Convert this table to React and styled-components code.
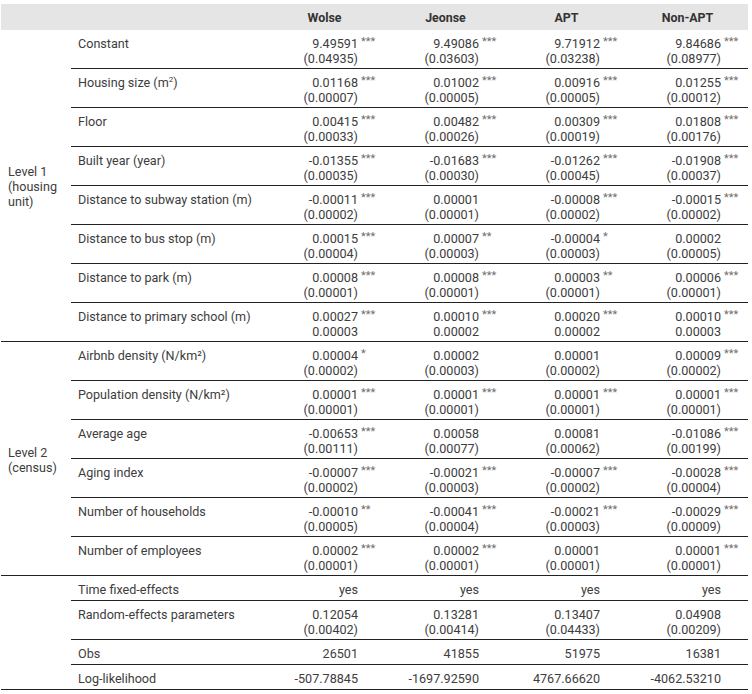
import React from "react";
import styled, { createGlobalStyle } from "styled-components";

const GlobalStyle = createGlobalStyle`
	body {
		margin: 0;
		background: #fff;
		font-family: Roboto, "Liberation Sans", sans-serif;
		color: #3d3d3d;
	}
`;

const Page = styled.div`
	padding: 4px 4px 0 1px;
`;

const Table = styled.div`
	width: 747px;
	display: flex;
	flex-direction: column;
	font-size: 12.6px;
	line-height: 15px;
`;

const HeaderRow = styled.div`
	display: grid;
	grid-template-columns: 263px repeat(4, 121px);
	height: 26px;
	align-items: center;
	background-color: #e5e5e5;
`;

const HeaderCell = styled.div`
	text-align: center;
	font-weight: 700;
	font-size: 12.4px;
	color: #333;
	padding-top: 1px;
`;

const Group = styled.div`
	display: grid;
	grid-template-columns: 70px 1fr;
	border-bottom: 1px solid #222;
`;

const GroupLabel = styled.div`
	display: flex;
	align-items: center;
	padding-left: 7px;
	padding-top: 2px;
`;

const Rows = styled.div`
	display: flex;
	flex-direction: column;
`;

const Row = styled.div`
	display: grid;
	grid-template-columns: 193px repeat(4, 121px);
	padding: 6px 0 ${(p) => (p.$tall ? "2px" : "3px")};
	border-bottom: 1px solid #222;
	&:last-child {
		border-bottom: none;
	}
`;

const VarName = styled.div`
	padding-left: 7px;
	sup {
		font-size: 8px;
		line-height: 0;
	}
`;

const Cell = styled.div`
	display: grid;
	grid-template-columns: 1fr 27px;
	justify-items: end;
`;

const Value = styled.span`
	grid-column: 1;
`;

const Stars = styled.span`
	grid-column: 2;
	justify-self: start;
	padding-left: 3px;
	font-size: 11px;
	line-height: 12px;
	color: #707070;
`;

const levelOne = [
	["Constant", ["9.49591", "***", "(0.04935)"], ["9.49086", "***", "(0.03603)"], ["9.71912", "***", "(0.03238)"], ["9.84686", "***", "(0.08977)"]],
	[<>Housing size (m<sup>2</sup>)</>, ["0.01168", "***", "(0.00007)"], ["0.01002", "***", "(0.00005)"], ["0.00916", "***", "(0.00005)"], ["0.01255", "***", "(0.00012)"]],
	["Floor", ["0.00415", "***", "(0.00033)"], ["0.00482", "***", "(0.00026)"], ["0.00309", "***", "(0.00019)"], ["0.01808", "***", "(0.00176)"]],
	["Built year (year)", ["-0.01355", "***", "(0.00035)"], ["-0.01683", "***", "(0.00030)"], ["-0.01262", "***", "(0.00045)"], ["-0.01908", "***", "(0.00037)"]],
	["Distance to subway station (m)", ["-0.00011", "***", "(0.00002)"], ["0.00001", "", "(0.00001)"], ["-0.00008", "***", "(0.00002)"], ["-0.00015", "***", "(0.00002)"]],
	["Distance to bus stop (m)", ["0.00015", "***", "(0.00004)"], ["0.00007", "**", "(0.00003)"], ["-0.00004", "*", "(0.00003)"], ["0.00002", "", "(0.00005)"]],
	["Distance to park (m)", ["0.00008", "***", "(0.00001)"], ["0.00008", "***", "(0.00001)"], ["0.00003", "**", "(0.00001)"], ["0.00006", "***", "(0.00001)"]],
	["Distance to primary school (m)", ["0.00027", "***", "0.00003"], ["0.00010", "***", "0.00002"], ["0.00020", "***", "0.00002"], ["0.00010", "***", "0.00003"]],
];

const levelTwo = [
	["Airbnb density (N/km²)", ["0.00004", "*", "(0.00002)"], ["0.00002", "", "(0.00003)"], ["0.00001", "", "(0.00002)"], ["0.00009", "***", "(0.00002)"]],
	["Population density (N/km²)", ["0.00001", "***", "(0.00001)"], ["0.00001", "***", "(0.00001)"], ["0.00001", "***", "(0.00001)"], ["0.00001", "***", "(0.00001)"]],
	["Average age", ["-0.00653", "***", "(0.00111)"], ["0.00058", "", "(0.00077)"], ["0.00081", "", "(0.00062)"], ["-0.01086", "***", "(0.00199)"]],
	["Aging index", ["-0.00007", "***", "(0.00002)"], ["-0.00021", "***", "(0.00003)"], ["-0.00007", "***", "(0.00002)"], ["-0.00028", "***", "(0.00004)"]],
	["Number of households", ["-0.00010", "**", "(0.00005)"], ["-0.00041", "***", "(0.00004)"], ["-0.00021", "***", "(0.00003)"], ["-0.00029", "***", "(0.00009)"]],
	["Number of employees", ["0.00002", "***", "(0.00001)"], ["0.00002", "***", "(0.00001)"], ["0.00001", "", "(0.00001)"], ["0.00001", "***", "(0.00001)"]],
];

const summary = [
	["Time fixed-effects", ["yes"], ["yes"], ["yes"], ["yes"]],
	["Random-effects parameters", ["0.12054", "", "(0.00402)"], ["0.13281", "", "(0.00414)"], ["0.13407", "", "(0.04433)"], ["0.04908", "", "(0.00209)"]],
	["Obs", ["26501"], ["41855"], ["51975"], ["16381"]],
	["Log-likelihood", ["-507.78845"], ["-1697.92590"], ["4767.66620"], ["-4062.53210"]],
];

const columns = ["Wolse", "Jeonse", "APT", "Non-APT"];

const DataRow = ({ name, cells }) => {
	const tall = cells.some((c) => c[2]);
	return (
		<Row $tall={tall}>
			<VarName>{name}</VarName>
			{cells.map(([value, stars, se], i) => (
				<Cell key={i}>
					<Value>{value}</Value>
					<Stars>{stars}</Stars>
					{se && <Value>{se}</Value>}
				</Cell>
			))}
		</Row>
	);
};

const Section = ({ label, rows }) => (
	<Group>
		<GroupLabel>{label}</GroupLabel>
		<Rows>
			{rows.map(([name, ...cells], i) => (
				<DataRow key={i} name={name} cells={cells} />
			))}
		</Rows>
	</Group>
);

const App = () => (
	<Page>
		<GlobalStyle />
		<Table>
			<HeaderRow>
				<div />
				{columns.map((c) => (
					<HeaderCell key={c}>{c}</HeaderCell>
				))}
			</HeaderRow>
			<Section
				label={
					<span>
						Level 1<br />
						(housing
						<br />
						unit)
					</span>
				}
				rows={levelOne}
			/>
			<Section
				label={
					<span>
						Level 2<br />
						(census)
					</span>
				}
				rows={levelTwo}
			/>
			<Section label={null} rows={summary} />
		</Table>
	</Page>
);

export default App;
